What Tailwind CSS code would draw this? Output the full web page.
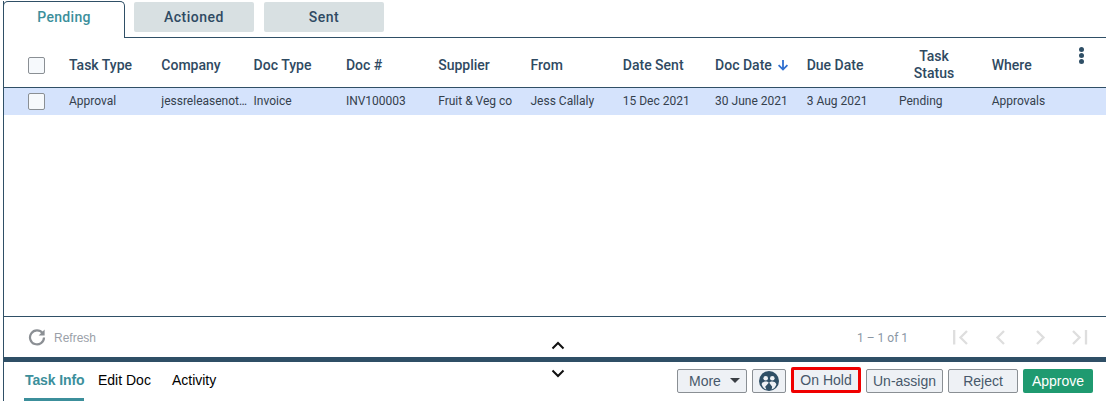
<!DOCTYPE html>
<html><head><meta charset="utf-8"><script src="https://cdn.jsdelivr.net/npm/@tailwindcss/browser@4"></script></head>
<body class="m-0 bg-white overflow-hidden">
<div class="w-[1103px] h-[400px] mt-px ml-[3px] overflow-hidden flex flex-col font-['Roboto',sans-serif] text-[#2f4a62] border-l border-[#2f4f66] box-border">
  <div class="h-[37px] flex items-start relative shrink-0">
    <div class="absolute left-0 right-0 bottom-0 h-px bg-[#2f4f66]"></div>
    <div class="relative z-10 -ml-px w-[122px] h-[37px] bg-white border border-b-0 border-[#2f4f66] rounded-t-[5px] flex items-center justify-center text-sm font-medium text-[#3c8f9b] pb-[6px] tracking-[0.3px]">Pending</div>
    <div class="ml-[9px] mt-[1px] w-[120px] h-[30px] bg-[#d8e0e2] rounded-[2px] flex items-center justify-center text-sm font-medium tracking-[0.5px]">Actioned</div>
    <div class="ml-[10px] mt-[1px] w-[120px] h-[30px] bg-[#d8e0e2] rounded-[2px] flex items-center justify-center text-sm font-medium tracking-[0.5px]">Sent</div>
  </div>
  <div class="h-[50px] shrink-0 border-b border-[#2f4f66] grid grid-cols-[65px_92.3px_92.3px_92.3px_92.3px_92.3px_92.3px_92.3px_91.6px_92.3px_92.8px_85px_auto] items-center text-sm font-medium relative pt-[5px]">
    <div class="pl-[24px]"><div class="w-[17px] h-[17px] border border-[#8a8f94] rounded-[2px] bg-[#f6f9fc]"></div></div>
    <div>Task Type</div><div>Company</div><div>Doc Type</div><div>Doc #</div><div>Supplier</div><div>From</div><div>Date Sent</div>
    <div class="flex items-center gap-[5px] whitespace-nowrap">Doc Date
      <svg width="12" height="12" viewBox="0 0 12 12" fill="none" stroke="#2f6fd0" stroke-width="1.8"><path d="M6 1v9.500M1.600 6.200 6 10.600l4.400-4.400"/></svg></div>
    <div>Due Date</div>
    <div class="w-[70px] text-center leading-[17.500px]">Task Status</div>
    <div>Where</div>
    <div class="absolute left-[1075px] top-[9px] flex flex-col gap-[1.5px]"><span class="w-[4.500px] h-[4.500px] rounded-full bg-[#2f4f66]"></span><span class="w-[4.500px] h-[4.500px] rounded-full bg-[#2f4f66]"></span><span class="w-[4.500px] h-[4.500px] rounded-full bg-[#2f4f66]"></span></div>
  </div>
  <div class="h-[27px] shrink-0 bg-[#d5e3fc] grid grid-cols-[65px_92.3px_92.3px_92.3px_92.3px_92.3px_92.3px_92.3px_91.6px_92.3px_92.8px_85px_auto] items-center text-xs text-[#34404c] pb-[2px]">
    <div class="pl-[24px] mt-[2px]"><div class="w-[17px] h-[17px] border border-[#8a8f94] rounded-[2px] bg-[#f6f9fc]"></div></div>
    <div>Approval</div><div class="truncate pr-[4px]">jessreleasenotes</div><div>Invoice</div><div>INV100003</div><div>Fruit &amp; Veg co</div><div>Jess Callaly</div><div>15 Dec 2021</div><div>30 June 2021</div><div>3 Aug 2021</div><div>Pending</div><div>Approvals</div>
  </div>
  <div class="h-[202px] shrink-0 border-b border-[#2f4f66]"></div>
  <div class="h-[40px] shrink-0 flex items-center font-['Liberation_Sans',sans-serif] relative">
    <svg class="ml-[24px]" width="18" height="18" viewBox="0 0 18 18" fill="none"><path d="M14.600 5.200A7 7 0 1 0 16 9.500" stroke="#8b8f94" stroke-width="2.200"/><path d="M16.600 1.600v6h-6z" fill="#8b8f94"/></svg>
    <span class="ml-[8px] pt-[2px] text-xs text-[#9aa0a8]">Refresh</span>
    <span class="absolute left-[853px] top-[13px] text-xs text-[#8a97a5] font-['Roboto',sans-serif]">1 – 1 of 1</span>
    <svg class="absolute left-[949px] top-[13px]" width="140" height="15" viewBox="0 0 140 15" fill="none" stroke="#dedede" stroke-width="2.300"><path d="M1.200 0v14.500"/><path d="M14 1 7.500 7.500 14 14"/><path d="M51 1 44.500 7.500 51 14"/><path d="M84 1l6.500 6.500L84 14"/><path d="M120 1l6.500 6.500L120 14"/><path d="M133 0v14.500"/></svg>
  </div>
  <div class="h-[5px] shrink-0 bg-[#2f4f66] relative"></div>
  <div class="flex-1 relative font-['Liberation_Sans',sans-serif] flex items-start">
    <div class="ml-[20px] h-[39px] flex items-center gap-[13px] text-sm text-black">
      <div class="h-full w-[60px] flex items-center border-b-[3px] border-[#3c8f9b] pl-px font-bold text-[#3c8f9b] whitespace-nowrap tracking-[-0.1px]">Task Info</div>
      <div class="ml-[1px] pb-[4px]">Edit Doc</div>
      <div class="ml-[8px] pb-[4px]">Activity</div>
    </div>
    <div class="absolute left-[673px] top-[6px] flex items-center text-sm text-[#47586a]">
      <div class="w-[70px] h-[24px] bg-[#eef1f5] border border-[#8a8f94] rounded-[2px] flex items-center pl-[11px] gap-[9px]">More<span class="w-0 h-0 border-x-[5px] border-x-transparent border-t-[5px] border-t-[#3a3f44]"></span></div>
      <div class="ml-[5px] w-[34px] h-[24px] bg-[#eef1f5] border border-[#8a8f94] rounded-[2px] flex items-center justify-center">
        <svg width="20" height="20" viewBox="0 0 20 20"><circle cx="10" cy="10" r="10" fill="#2f4f66"/><circle cx="6.700" cy="7.300" r="2.300" fill="#eef1f5"/><circle cx="13.300" cy="7.300" r="2.300" fill="#eef1f5"/><path d="M2.600 13.200c.6-2 2.600-2.700 4.200-2.700 1.200 0 2.300.4 3 1.200L6.200 15.800l1.200 2.700c-2.300-.6-4-2.700-4.800-5.300z" fill="#eef1f5"/><path d="M17.400 13.200c-.6-2-2.600-2.700-4.200-2.700-1.200 0-2.300.4-3 1.200l3 4.100-.6 2.700c2.300-.6 4-2.700 4.800-5.300z" fill="#eef1f5"/></svg></div>
      <div class="ml-[5px] w-[70px] h-[26px] -mt-px bg-[#eef1f5] border-[3px] border-[#f00000] rounded-[2px] flex items-center justify-center">On Hold</div>
      <div class="ml-[5px] w-[77px] h-[24px] bg-[#eef1f5] border border-[#8a8f94] rounded-[2px] flex items-center justify-center">Un-assign</div>
      <div class="ml-[5px] w-[70px] h-[24px] bg-[#eef1f5] border border-[#8a8f94] rounded-[2px] flex items-center justify-center">Reject</div>
      <div class="ml-[5px] w-[70px] h-[24px] bg-[#1f9a70] rounded-[2px] flex items-center justify-center text-white">Approve</div>
    </div>
  </div>
  <svg class="absolute left-[551px] top-[341px]" width="14" height="9" viewBox="0 0 14 9" fill="none" stroke="#111" stroke-width="2"><path d="M1.500 7.500 7 2l5.500 5.500"/></svg>
  <svg class="absolute left-[551px] top-[369px]" width="14" height="9" viewBox="0 0 14 9" fill="none" stroke="#111" stroke-width="2"><path d="M1.500 1.500 7 7l5.500-5.500"/></svg>
</div>
</body></html>
